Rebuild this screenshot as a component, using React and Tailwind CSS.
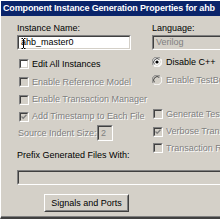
import React from 'react'

const font = "font-['Liberation_Sans',Arial,sans-serif]"
const dis = 'text-[#808080] [text-shadow:1px_1px_0_#ffffff]'

function Field({ className = '', disabled, children }) {
  return (
    <div className={`shrink-0 border border-t-[#808080] border-l-[#808080] border-r-white border-b-white ${className}`}>
      <div className={`w-full h-full border border-t-[#404040] border-l-[#404040] border-r-[#d4d0c8] border-b-[#d4d0c8] relative flex items-center pl-[2px] whitespace-nowrap ${disabled ? 'bg-[#d4d0c8] text-[#808080]' : 'bg-white text-black'}`}>
        {children}
      </div>
    </div>
  )
}

function Check({ checked, disabled }) {
  return (
    <div className="w-[10px] h-[10px] shrink-0 border border-t-[#808080] border-l-[#808080] border-r-white border-b-white">
      <div className={`w-full h-full border border-t-[#404040] border-l-[#404040] border-r-[#d4d0c8] border-b-[#d4d0c8] flex items-center justify-center ${disabled ? 'bg-[#d4d0c8]' : 'bg-white'}`}>
        {checked && (
          <svg width="6" height="6" viewBox="0 0 6 6">
            <path d="M0.5 2.5 L2.2 4.2 L5.5 0.8" stroke={disabled ? '#808080' : '#000'} strokeWidth="1.3" fill="none" />
          </svg>
        )}
      </div>
    </div>
  )
}

function Radio({ on, disabled }) {
  return (
    <svg width="10" height="10" viewBox="0 0 10 10" className="shrink-0">
      <circle cx="5" cy="5" r="4.5" fill={disabled ? '#d4d0c8' : '#fff'} />
      <path d="M1.5 8.5 A4.95 4.95 0 0 1 8.5 1.5" stroke="#808080" fill="none" />
      <path d="M8.5 1.5 A4.95 4.95 0 0 1 1.5 8.5" stroke="#fff" fill="none" />
      <path d="M2.53 7.47 A3.5 3.5 0 0 1 7.47 2.53" stroke="#404040" fill="none" />
      <path d="M7.47 2.53 A3.5 3.5 0 0 1 2.53 7.47" stroke="#d4d0c8" fill="none" />
      {on && <circle cx="5" cy="5" r="1.6" fill="#000" />}
    </svg>
  )
}

function CheckRow({ label, checked, disabled, h = 'h-[18px]', gap = 'gap-[3px]' }) {
  return (
    <div className={`${h} flex items-center ${gap} whitespace-nowrap`}>
      <Check checked={checked} disabled={disabled} />
      <span className={disabled ? dis : 'text-black'}>{label}</span>
    </div>
  )
}

export default function App() {
  return (
    <div className={`w-[220px] h-[219px] overflow-hidden bg-[#d4d0c8] border-t border-l border-t-white border-l-white border-b-2 border-b-[#404040] ${font} text-[9px] leading-[11px] flex flex-col`}>
      <div className="flex-1 border-b border-b-[#808080] flex flex-col overflow-hidden">
        {/* Title bar */}
        <div className="h-[15px] shrink-0 bg-[#0a246a] text-white font-bold text-[9px] tracking-[-0.15px] pl-[2px] flex items-center whitespace-nowrap">
          Component Instance Generation Properties for ahb
        </div>

        <div className="flex">
          {/* Left column */}
          <div className="w-[135px] shrink-0 pl-[16px] flex flex-col">
            <div className="mt-[7px]">Instance Name:</div>
            <Field className="mt-[1px] w-[114px] h-[15px]">
              <svg width="5" height="11" viewBox="0 0 5 11" className="absolute left-[2px] top-[1px]">
                <path d="M0.5 0.5 H2 M3 0.5 H4.5 M2.5 1 V10 M0.5 10.5 H2 M3 10.5 H4.5" stroke="#000" strokeWidth="1" fill="none" />
              </svg>
              <span>ahb_master0</span>
            </Field>
            <div className="mt-[5px] pl-[2px] flex flex-col">
              <CheckRow label="Edit All Instances" />
              <CheckRow label="Enable Reference Model" disabled />
              <CheckRow label="Enable Transaction Manager" disabled h="h-[17px]" />
              <CheckRow label="Add Timestamp to Each File" checked disabled h="h-[17px]" />
            </div>
            <div className="h-[16px] flex items-center whitespace-nowrap">
              <span className={`${dis} w-[80px] pl-[1px]`}>Source Indent Size:</span>
              <Field disabled className="w-[16px] h-[16px]">
                <span>2</span>
              </Field>
            </div>
          </div>

          {/* Right column */}
          <div className="flex-1 pl-[16px] flex flex-col whitespace-nowrap">
            <div className="mt-[7px]">Language:</div>
            <Field disabled className="mt-[1px] w-[100px] h-[15px]">
              <span>Verilog</span>
            </Field>
            <div className="mt-[3px] flex flex-col">
              <div className="h-[18px] flex items-center gap-[4px]">
                <Radio on />
                <span>Disable C++</span>
              </div>
              <div className="h-[18px] flex items-center gap-[4px]">
                <Radio disabled />
                <span className={dis}>Enable TestBuilder</span>
              </div>
            </div>
            <div className="mt-[16px] pl-[1px] flex flex-col">
              <CheckRow label="Generate Test Program" disabled />
              <CheckRow label="Verbose Transactions" checked disabled h="h-[17px]" />
              <CheckRow label="Transaction Recording" disabled h="h-[16px]" />
            </div>
          </div>
        </div>

        {/* Bottom section */}
        <div className="pl-[16px] flex flex-col">
          <div className="mt-[-6px]">Prefix Generated Files With:</div>
          <Field disabled className="mt-[9px] w-[250px] h-[15px]" />
          <button className="mt-[9px] ml-[27px] w-[85px] h-[18px] shrink-0 border border-t-white border-l-white border-r-[#404040] border-b-[#404040] bg-[#d4d0c8] p-0">
            <div className="w-full h-full border border-t-[#d4d0c8] border-l-[#d4d0c8] border-r-[#808080] border-b-[#808080] flex items-center justify-center text-black whitespace-nowrap">
              Signals and Ports
            </div>
          </button>
        </div>
      </div>
    </div>
  )
}
